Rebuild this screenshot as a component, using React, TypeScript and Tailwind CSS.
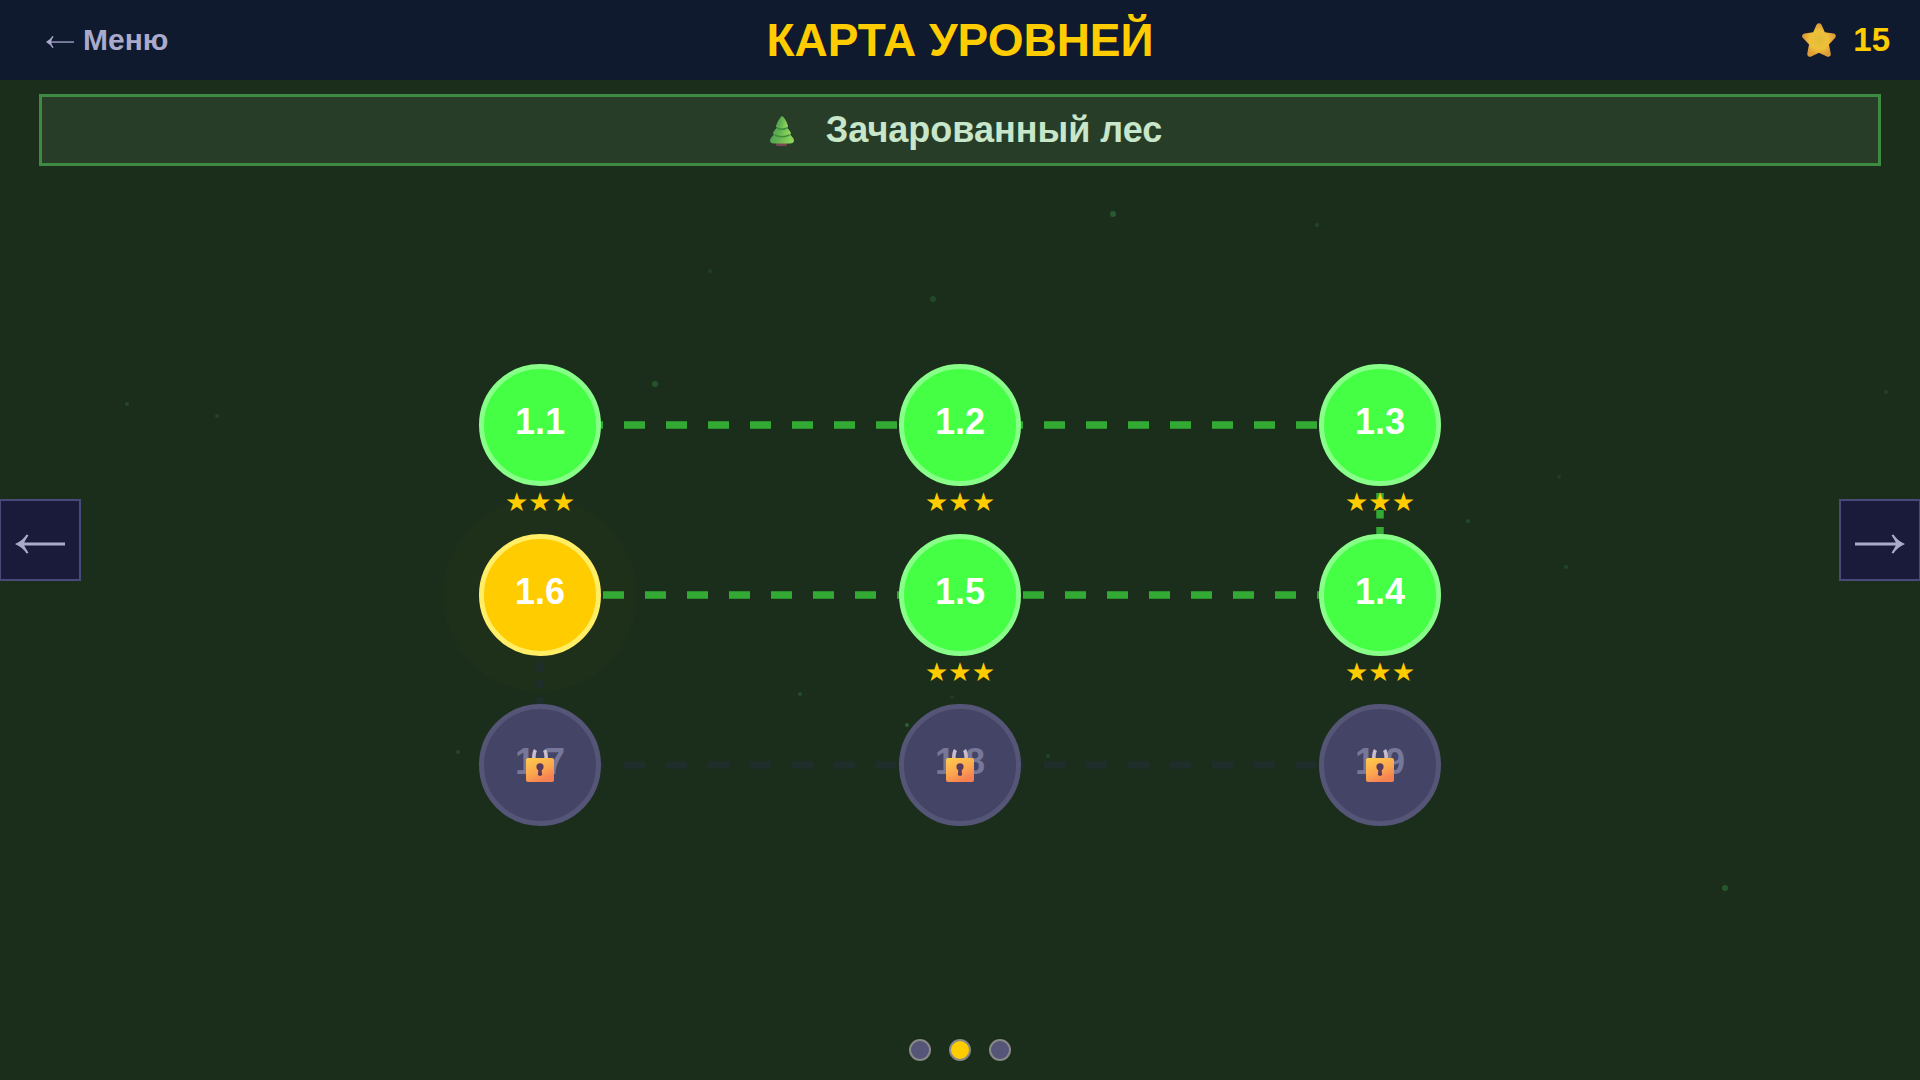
import { useState } from 'react';

type Status = 'done' | 'current' | 'locked';

interface Level {
  id: string;
  status: Status;
  stars: number;
}

// Rows are listed left to right, the path itself goes in a snake
const LEVELS: Level[] = [
  { id: '1.1', status: 'done', stars: 3 },
  { id: '1.2', status: 'done', stars: 3 },
  { id: '1.3', status: 'done', stars: 3 },
  { id: '1.6', status: 'current', stars: 0 },
  { id: '1.5', status: 'done', stars: 3 },
  { id: '1.4', status: 'done', stars: 3 },
  { id: '1.7', status: 'locked', stars: 0 },
  { id: '1.8', status: 'locked', stars: 0 },
  { id: '1.9', status: 'locked', stars: 0 },
];

const COLS = ['16.6667%', '50%', '83.3333%'];
const ROWS = [61, 231, 401];

// [from col, from row, to col, to row, open]
const PATHS: [number, number, number, number, boolean][] = [
  [0, 0, 1, 0, true],
  [1, 0, 2, 0, true],
  [2, 0, 2, 1, true],
  [2, 1, 1, 1, true],
  [1, 1, 0, 1, true],
  [0, 1, 0, 2, false],
  [0, 2, 1, 2, false],
  [1, 2, 2, 2, false],
];

// x, y, radius, opacity
const FIREFLIES = [
  [1113, 214, 3, 0.35],
  [1317, 225, 2, 0.2],
  [710, 271, 2, 0.15],
  [933, 299, 3, 0.22],
  [655, 384, 3, 0.3],
  [127, 404, 2, 0.22],
  [217, 416, 2, 0.18],
  [1886, 392, 2, 0.15],
  [1559, 477, 2, 0.12],
  [1468, 521, 2, 0.22],
  [1566, 567, 2, 0.2],
  [800, 694, 2, 0.25],
  [907, 725, 2, 0.4],
  [952, 697, 2, 0.12],
  [1048, 756, 2, 0.18],
  [458, 752, 2, 0.22],
  [1725, 888, 3, 0.32],
];

const NODE_STYLES: Record<Status, string> = {
  done: 'bg-[#44ff44] border-[#88ff88] text-white',
  current: 'bg-[#ffcc00] border-[#ffee66] text-white',
  locked: 'bg-[#444466] border-[#555577] text-[#777799]',
};

const WORLDS = ['Мир 1', 'Зачарованный лес', 'Мир 3'];

const Lock = () => (
  <svg viewBox="0 0 32 34" className="absolute left-1/2 top-1/2 w-8 -translate-x-1/2 -translate-y-1/2" aria-hidden="true">
    <defs>
      <linearGradient id="lockBody" x1="0" y1="0" x2="0.5" y2="1">
        <stop offset="0" stopColor="#ffcc4d" />
        <stop offset="0.6" stopColor="#fba74f" />
        <stop offset="1" stopColor="#f58052" />
      </linearGradient>
    </defs>
    <path d="M11.500 2Q9.800 4.500 9.800 10.500M20.500 2Q22.200 4.500 22.200 10.500" fill="none" stroke="#c9bccb" strokeWidth="3.600" />
    <rect x="2" y="10" width="28" height="24" rx="2" fill="url(#lockBody)" />
    <circle cx="16" cy="18.800" r="3.600" fill="#5a3a5c" />
    <path d="M14.600 19.400h2.800l.7 7.200q-.2 1.400-2.100 1.400t-2.100-1.400z" fill="#5a3a5c" />
  </svg>
);

const Tree = () => (
  <svg viewBox="0 0 48 36" className="h-9 w-12" aria-hidden="true">
    <defs>
      <linearGradient id="treeLeaf" x1="0" y1="0" x2="1" y2="0.3">
        <stop offset="0" stopColor="#4d9a5c" />
        <stop offset="0.5" stopColor="#60b050" />
        <stop offset="1" stopColor="#8bd35c" />
      </linearGradient>
    </defs>
    <rect x="18" y="28" width="11" height="6" rx="1.5" fill="#7a4654" />
    <path d="M24 16C20 19 12 25 12 28.5Q12 31.500 16 31.500H32Q36 31.500 36 28.500C36 25 28 19 24 16Z" fill="url(#treeLeaf)" />
    <path d="M24 10C21 14 15 19 15 21.500Q16 24.500 24 24.500T33 21.500C33 19 27 14 24 10Z" fill="url(#treeLeaf)" />
    <path d="M16.500 23Q24 26.500 31.500 23" fill="none" stroke="#3f8f3a" strokeWidth="1.500" />
    <path d="M24 4C22.500 4.500 18 12 18 14.500Q18.500 17 24 17T30 14.500C30 12 26 4.500 24 4Z" fill="url(#treeLeaf)" />
    <path d="M19 16Q24 18.500 29 16" fill="none" stroke="#3f8f3a" strokeWidth="1.500" />
  </svg>
);

const GoldStar = () => (
  <svg viewBox="0 0 36 36" className="size-9" aria-hidden="true">
    <defs>
      <radialGradient id="goldStar" cx="0.5" cy="0.5" r="0.55">
        <stop offset="0" stopColor="#e2bd38" />
        <stop offset="0.6" stopColor="#efc03a" />
        <stop offset="1" stopColor="#dd9c38" />
      </radialGradient>
    </defs>
    <path
      d="M18 4L22 12.800L32 14.200L25 21.500L27 32L18 27.800L9 32L11 21.500L4 14.200L14 12.800Z"
      fill="url(#goldStar)"
      stroke="url(#goldStar)"
      strokeWidth="5.500"
      strokeLinejoin="round"
    />
  </svg>
);

const LevelNode = ({ level }: { level: Level }) => (
  <div className="relative flex flex-col items-center">
    <button
      type="button"
      disabled={level.status === 'locked'}
      className={`relative flex size-[122px] items-center justify-center rounded-full border-[5px] pb-1.5 text-4xl font-bold ${NODE_STYLES[level.status]}`}
    >
      {level.id}
      {level.status === 'locked' && <Lock />}
    </button>
    <div className="h-8 font-['DejaVu_Sans'] text-[26px] leading-8 text-[#ffcc00]">{'★'.repeat(level.stars)}</div>
  </div>
);

export default function App() {
  const [world, setWorld] = useState(1);

  return (
    <div className="relative flex min-h-screen flex-col bg-[#1b2e1b] font-['Liberation_Sans',Arial,sans-serif]">
      <svg viewBox="0 0 1920 1080" preserveAspectRatio="xMidYMid slice" className="absolute inset-0 h-full w-full" aria-hidden="true">
        {FIREFLIES.map(([x, y, r, o], i) => (
          <circle key={i} cx={x} cy={y} r={r} fill="#44aa55" opacity={o} />
        ))}
      </svg>

      <header className="relative grid h-20 grid-cols-3 items-center bg-[#0f1a2e] px-[30px] font-bold">
        <button type="button" className="flex items-center gap-2 justify-self-start pl-[15px] text-3xl text-[#aaaacc]">
          <svg viewBox="0 0 30 14" className="mt-1 w-[30px]" fill="currentColor" aria-hidden="true">
            <rect x="5" y="6.400" width="24" height="1.300" />
            <path d="M1 7Q5.500 4.500 7.400 1L8.600 1.600Q6.500 4.500 6 7Q6.500 9.500 8.600 12.400L7.400 13Q5.500 9.500 1 7Z" />
          </svg>
          Меню
        </button>
        <h1 className="justify-self-center whitespace-nowrap text-[46px] text-[#ffcc00]">КАРТА УРОВНЕЙ</h1>
        <div className="flex items-center gap-4 justify-self-end text-[33px] text-[#ffcc00]">
          <GoldStar />
          <span>15</span>
        </div>
      </header>

      <div className="relative mx-[39px] mt-[14px] flex h-[72px] items-center justify-center gap-5 border-[3px] border-[#3f8a42] bg-[#273d27]">
        <Tree />
        <h2 className="text-4xl font-bold text-[#c8e6c9]">Зачарованный лес</h2>
      </div>

      <main className="relative flex flex-1 items-center justify-center pt-4">
        <div className="relative grid w-full max-w-[1260px] grid-cols-3 gap-y-4">
          <svg className="absolute inset-0 h-full w-full overflow-visible" aria-hidden="true">
            <circle cx={COLS[0]} cy={ROWS[1]} r="97" fill="#ffcc00" opacity="0.015" />
            {PATHS.map(([c1, r1, c2, r2, open], i) => (
              <line
                key={i}
                x1={COLS[c1]}
                y1={ROWS[r1]}
                x2={COLS[c2]}
                y2={ROWS[r2]}
                pathLength={20}
                strokeDasharray="1 1"
                strokeWidth="7.500"
                stroke={open ? '#33aa33' : '#1f2e2a'}
              />
            ))}
          </svg>
          {LEVELS.map(level => (
            <LevelNode key={level.id} level={level} />
          ))}
        </div>
      </main>

      <footer className="relative flex justify-center gap-[18px] pb-[19px]">
        {WORLDS.map((name, i) => (
          <button
            key={name}
            type="button"
            aria-label={name}
            onClick={() => setWorld(i)}
            className={`size-[22px] rounded-full border-2 border-[#888888] ${i === world ? 'bg-[#ffcc00]' : 'bg-[#555577]'}`}
          />
        ))}
      </footer>

      <button
        type="button"
        aria-label="Предыдущий мир"
        onClick={() => setWorld(Math.max(0, world - 1))}
        className="absolute left-0 top-1/2 flex h-[82px] w-[81px] -translate-y-1/2 items-center justify-center border-2 border-l border-[#4a4a7a] bg-[#1a1a3a] text-[#aaaacc]"
      >
        <svg viewBox="0 0 52 24" className="mt-2 w-[52px]" fill="currentColor" aria-hidden="true">
          <rect x="8" y="10.500" width="43" height="3" />
          <path d="M1 12Q9 8.500 12.500 2.500L14.500 3.300Q11 8.500 9.500 12Q11 15.500 14.500 20.700L12.500 21.500Q9 15.500 1 12Z" />
        </svg>
      </button>
      <button
        type="button"
        aria-label="Следующий мир"
        onClick={() => setWorld(Math.min(WORLDS.length - 1, world + 1))}
        className="absolute right-0 top-1/2 flex h-[82px] w-[81px] -translate-y-1/2 items-center justify-center border-2 border-r border-[#4a4a7a] bg-[#1a1a3a] text-[#aaaacc]"
      >
        <svg viewBox="0 0 52 24" className="mt-2 w-[52px]" fill="currentColor" aria-hidden="true">
          <rect x="1" y="10.500" width="43" height="3" />
          <path d="M51 12Q43 8.500 39.500 2.500L37.500 3.300Q41 8.500 42.500 12Q41 15.500 37.500 20.700L39.500 21.500Q43 15.500 51 12Z" />
        </svg>
      </button>
    </div>
  );
}
